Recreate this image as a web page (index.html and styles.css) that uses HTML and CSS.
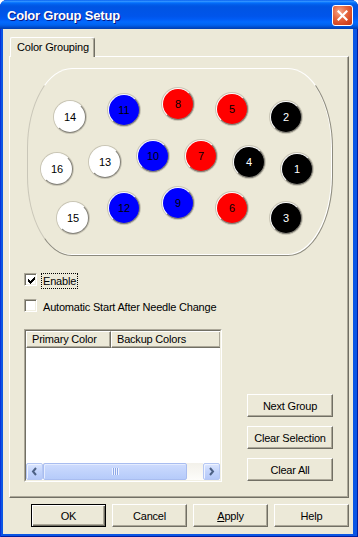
FILE: index.html
```html
<!DOCTYPE html>
<html>
<head>
<meta charset="utf-8">
<link rel="stylesheet" href="styles.css">
</head>
<body>
<div class="window">
  <div class="titlebar">
    <span class="title">Color Group Setup</span>
    <div class="close">
      <svg width="11" height="11" viewBox="0 0 11 11"><path d="M1.5 1.5L9.5 9.5M9.5 1.5L1.5 9.5" stroke="#fff" stroke-width="2.2" stroke-linecap="square" fill="none"/></svg>
    </div>
  </div>
  <div class="client">
    <div class="tabs"><div class="tab">Color Grouping</div></div>
    <div class="panel">
      <div class="shape">
        <div class="pin white" style="left:26px;top:32px">14</div>
        <div class="pin blue" style="left:80px;top:25px">11</div>
        <div class="pin red" style="left:134px;top:19px">8</div>
        <div class="pin red" style="left:188px;top:24px">5</div>
        <div class="pin black" style="left:242px;top:32px">2</div>
        <div class="pin white" style="left:13px;top:84px">16</div>
        <div class="pin white" style="left:61px;top:77px">13</div>
        <div class="pin blue" style="left:109px;top:71px">10</div>
        <div class="pin red" style="left:157px;top:71px">7</div>
        <div class="pin black" style="left:205px;top:77px">4</div>
        <div class="pin black" style="left:253px;top:84px">1</div>
        <div class="pin white" style="left:29px;top:133px">15</div>
        <div class="pin blue" style="left:80px;top:123px">12</div>
        <div class="pin blue" style="left:134px;top:118px">9</div>
        <div class="pin red" style="left:188px;top:123px">6</div>
        <div class="pin black" style="left:242px;top:133px">3</div>
      </div>
      <div class="check-row first">
        <div class="checkbox">
          <svg width="7" height="7" viewBox="0 0 7 7" shape-rendering="crispEdges"><path d="M0 2h1v3h-1z M1 3h1v3h-1z M2 4h1v3h-1z M3 3h1v3h-1z M4 2h1v3h-1z M5 1h1v3h-1z M6 0h1v3h-1z" fill="#000"/></svg>
        </div>
        <span class="label focus">Enable</span>
      </div>
      <div class="check-row second">
        <div class="checkbox"></div>
        <span class="label">Automatic Start After Needle Change</span>
      </div>
      <div class="lower">
        <div class="list">
          <div class="list-inner">
            <div class="header">
              <div class="hcell col1">Primary Color</div>
              <div class="hcell col2">Backup Colors</div>
            </div>
            <div class="list-body"></div>
            <div class="hscroll">
              <div class="arrow">
                <svg width="9" height="9" viewBox="0 0 9 9"><path d="M6 1L3 4.5L6 8" stroke="#4d6185" stroke-width="2" fill="none"/></svg>
              </div>
              <div class="track">
                <div class="thumb"><span class="grip"></span></div>
              </div>
              <div class="arrow">
                <svg width="9" height="9" viewBox="0 0 9 9"><path d="M3 1L6 4.5L3 8" stroke="#4d6185" stroke-width="2" fill="none"/></svg>
              </div>
            </div>
          </div>
        </div>
        <div class="side-buttons">
          <div class="btn side">Next Group</div>
          <div class="btn side">Clear Selection</div>
          <div class="btn side">Clear All</div>
        </div>
      </div>
    </div>
    <div class="bottom-buttons">
      <div class="btn main default">OK</div>
      <div class="btn main">Cancel</div>
      <div class="btn main"><span class="u">A</span>pply</div>
      <div class="btn main">Help</div>
    </div>
  </div>
</div>
</body>
</html>
```
FILE: styles.css
```css
* { box-sizing: border-box; }
html, body { margin: 0; padding: 0; }
body {
  width: 358px;
  height: 537px;
  overflow: hidden;
  background: #ffffff;
  font-family: "Liberation Sans", Arial, sans-serif;
  font-size: 11px;
  letter-spacing: -0.2px;
  color: #000;
}
.window {
  width: 358px;
  height: 537px;
  display: flex;
  flex-direction: column;
  background: #0a55e4;
  border-radius: 7px 7px 0 0;
  box-shadow: inset 1px 0 #0831d9, inset -1px 0 #001ea0, inset 0 -1px #001ea0;
}
.titlebar {
  height: 29px;
  flex: none;
  display: flex;
  align-items: center;
  justify-content: space-between;
  padding: 0 5px 0 7px;
  border-radius: 7px 7px 0 0;
  background: linear-gradient(to bottom, #0058ee 0%, #3593ff 4%, #288eff 6%, #127dff 8%, #036ffc 10%, #0262ee 14%, #0057e5 20%, #0054e3 24%, #0055eb 56%, #005bf5 66%, #026afe 76%, #0062ef 86%, #0052d6 92%, #0046c0 96%, #0040b0 100%);
}
.title {
  color: #fff;
  font-family: "Liberation Sans", Arial, sans-serif;
  font-weight: bold;
  font-size: 13px;
  letter-spacing: -0.2px;
  text-shadow: 1px 1px 0 #0a1883;
  padding-top: 2px;
}
.close {
  width: 21px;
  height: 21px;
  margin-top: 2px;
  border: 1px solid #fff;
  border-radius: 3px;
  background: radial-gradient(circle at 35% 30%, #f7a78a 0%, #e6673f 40%, #d4441f 75%, #c0391b 100%);
  display: flex;
  align-items: center;
  justify-content: center;
}
.client {
  flex: 1;
  margin: 0 5px 3px 3px;
  background: #ece9d8;
  display: flex;
  flex-direction: column;
  padding-top: 8px;
}
.tabs {
  display: flex;
  padding-left: 7px;
  position: relative;
  z-index: 1;
  margin-bottom: -1px;
}
.tab {
  width: 85px;
  height: 20px;
  background: #ece9d8;
  border-top: 1px solid #fff;
  border-left: 1px solid #fff;
  border-right: 1px solid #716f64;
  box-shadow: inset -1px 0 #aca899;
  border-radius: 2px 3px 0 0;
  padding: 2px 0 0 6px;
  line-height: 15px;
}
.panel {
  margin-left: 6px;
  width: 340px;
  height: 442px;
  border: 1px solid;
  border-color: #fff #716f64 #716f64 #fff;
  box-shadow: inset -1px -1px #aca899;
  padding: 11px 0 0 14px;
  display: flex;
  flex-direction: column;
}
.shape {
  position: relative;
  margin-left: 3px;
  width: 306px;
  height: 188px;
  border: 1px solid;
  border-color: #fff #8c8a7e #8c8a7e #c9c6b8;
  box-shadow: inset -1px -1px 0 #fff;
  border-radius: 45px / 80px;
}
.pin {
  position: absolute;
  width: 32px;
  height: 32px;
  border-radius: 50%;
  border: 1px solid;
  border-color: #fff #85837a #85837a #fff;
  box-shadow: 0 0 0 1px rgba(150, 146, 130, 0.4);
  display: flex;
  align-items: center;
  justify-content: center;
  font-size: 11px;
  letter-spacing: 0;
  line-height: 1;
  padding-top: 1px;
}
.white { background: #fff; color: #000; }
.blue { background: #0000ff; color: #000; }
.red { background: #ff0000; color: #000; }
.black { background: #000; color: #fff; }
.check-row {
  display: flex;
  align-items: flex-start;
  height: 16px;
}
.check-row.first { margin-top: 17px; }
.check-row.second { margin-top: 10px; }
.checkbox {
  width: 13px;
  height: 13px;
  flex: none;
  background: #fff;
  border: 1px solid;
  border-color: #aca899 #fff #fff #aca899;
  box-shadow: inset 1px 1px #716f64, inset -1px -1px #f1efe2;
  padding: 2px 0 0 2px;
  display: flex;
}
.checkbox svg { margin: 1px 0 0 1px; }
.label {
  margin-left: 4px;
  border: 1px solid transparent;
  padding: 0 1px;
  line-height: 14px;
}
.label.focus { border: 1px dotted #000; }
.lower {
  display: flex;
  margin-top: 14px;
}
.list {
  width: 198px;
  height: 153px;
  border: 1px solid;
  border-color: #aca899 #fff #fff #aca899;
}
.list-inner {
  height: 100%;
  border: 1px solid;
  border-color: #716f64 #f1efe2 #f1efe2 #716f64;
  background: #fff;
  display: flex;
  flex-direction: column;
}
.header {
  height: 17px;
  display: flex;
  flex: none;
  background: #ece9d8;
}
.hcell {
  height: 17px;
  border-top: 1px solid #fff;
  border-left: 1px solid #fff;
  border-right: 1px solid #716f64;
  border-bottom: 1px solid #716f64;
  box-shadow: inset -1px -1px #aca899;
  padding-left: 5px;
  line-height: 14px;
  white-space: nowrap;
}
.col1 { width: 85px; }
.col2 { flex: 1; border-right: none; }
.list-body { flex: 1; }
.hscroll {
  height: 17px;
  display: flex;
  flex: none;
}
.arrow {
  width: 17px;
  height: 17px;
  border: 1px solid #b5c7f3;
  border-radius: 2px;
  background: linear-gradient(to bottom, #dce6fe, #c3d4fc 50%, #b4c8f8);
  box-shadow: inset 1px 1px #eef3ff;
  display: flex;
  align-items: center;
  justify-content: center;
}
.track {
  flex: 1;
  background: linear-gradient(to bottom, #f3f1ea, #fdfdfa);
  display: flex;
}
.thumb {
  width: 144px;
  height: 17px;
  border: 1px solid #a9bdf0;
  border-radius: 2px;
  background: linear-gradient(to bottom, #cfdcfd, #c1d3fc 50%, #b6cbfa);
  box-shadow: inset 1px 1px #e4ecff;
  display: flex;
  align-items: center;
  justify-content: center;
}
.grip {
  width: 7px;
  height: 7px;
  background: repeating-linear-gradient(to right, #eef3ff 0, #eef3ff 1px, #8ea9e8 1px, #8ea9e8 2px);
}
.side-buttons {
  margin-left: 25px;
  width: 86px;
  display: flex;
  flex-direction: column;
  justify-content: flex-end;
  gap: 9px;
  padding-bottom: 1px;
}
.btn {
  background: #ece9d8;
  border: 1px solid;
  border-color: #fff #716f64 #716f64 #fff;
  box-shadow: inset -1px -1px #aca899;
  display: flex;
  align-items: center;
  justify-content: center;
  white-space: nowrap;
}
.btn.side { height: 23px; }
.bottom-buttons {
  display: flex;
  gap: 6px;
  padding-left: 28px;
  margin-top: 6px;
}
.btn.main { width: 75px; height: 23px; }
.btn.default {
  border: 1px solid #000;
  box-shadow: inset 1px 1px #fff, inset -1px -1px #716f64, inset -2px -2px #aca899;
}
.u { text-decoration: underline; }
```
